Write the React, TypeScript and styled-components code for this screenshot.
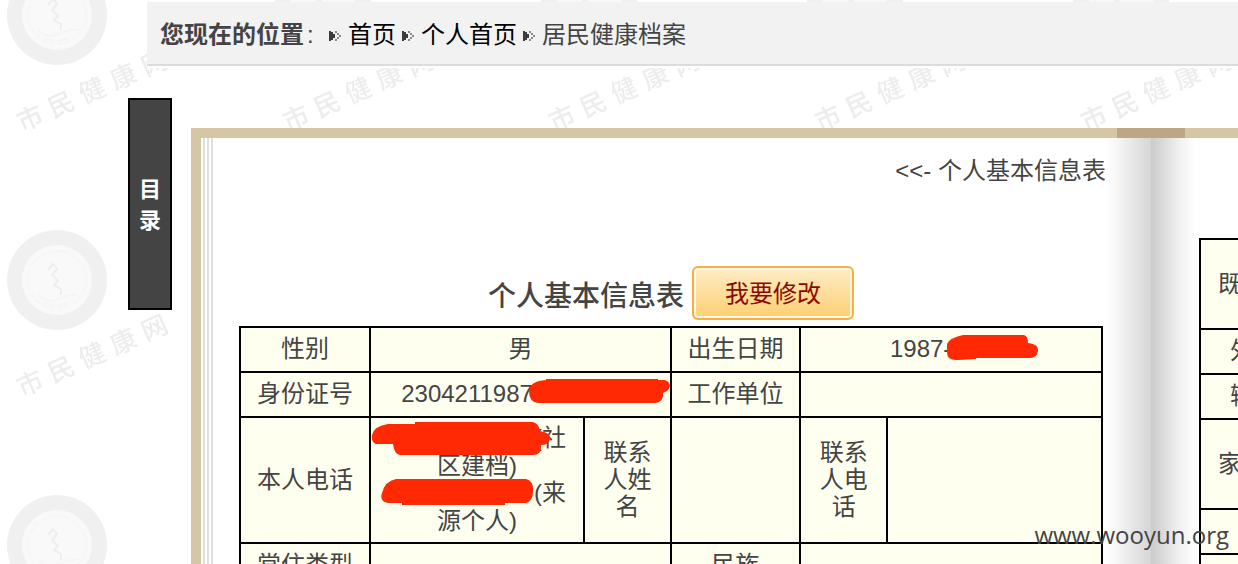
import React from "react";
import styled, { createGlobalStyle } from "styled-components";

const INK = "#444";
const TAN = "#d7c6a5";

const GlobalStyle = createGlobalStyle`
  * { box-sizing: border-box; }
  body {
    margin: 0;
    background: #fff;
    color: ${INK};
    font: 24px/27px "Liberation Sans", "Noto Sans CJK SC", sans-serif;
  }
`;

const Page = styled.div`
  position: relative;
  display: flex;
  flex-direction: column;
  height: 100vh;
  overflow: hidden;
  padding-top: 2px;
`;

const Backdrop = styled.svg`
  position: absolute;
  inset: 0;
  width: 100%;
  height: 100%;
  z-index: -1;
`;

const Breadcrumb = styled.nav`
  display: flex;
  align-items: center;
  flex: none;
  height: 66px;
  margin-left: 147px;
  padding: 0 0 2px 13px;
  background: linear-gradient(#f2f2f2 62px, #dcdcdc 62px, #dcdcdc 64px, #fff 64px);
`;

const Crumb = styled.a`
  color: #000;
  text-decoration: none;
`;

const Arrow = styled.svg`
  flex: none;
  width: 12px;
  height: 12px;
  margin: 4px 7px 0 6px;
`;

const Colon = styled.span`
  width: 19px;
  padding-left: 3px;
`;

const Main = styled.main`
  display: flex;
  flex: 1;
  align-items: flex-start;
  padding-left: 128px;
`;

const Contents = styled.button`
  flex: none;
  width: 44px;
  height: 212px;
  margin: 30px 19px 0 0;
  padding: 0 8px 2px;
  border: 2px solid #000;
  background: #444;
  color: #fff;
  font: bold 22px/31px "Noto Sans CJK SC", sans-serif;
`;

const Book = styled.div`
  display: flex;
  flex: 1;
  min-width: 0;
  margin-top: 60px;
  border-left: 10px solid ${TAN};
`;

const LeftPage = styled.section`
  flex: 1;
  min-width: 0;
  padding: 19px 2px 0 38px;
  border-top: 10px solid ${TAN};
  background: linear-gradient(
      90deg,
      #fff 2px, #dfdfdf 2px, #dfdfdf 4px,
      #fff 4px, #fff 6px, #dfdfdf 6px, #dfdfdf 8px,
      #fff 8px, #fff 10px, #dfdfdf 10px, #dfdfdf 12px, #fff 12px
    );
`;

const Spine = styled.div`
  flex: none;
  width: 94px;
  padding-top: 10px;
  background: linear-gradient(90deg, ${TAN} 12px, #bda684 12px, #bda684 80px, ${TAN} 80px);
`;

const SpineShade = styled.div`
  height: 100%;
  background: linear-gradient(
    90deg,
    #fff 0, #f6f6f6 12px, #e6e6e6 28px, #d6d6d6 46px,
    #cbcbcb 46px, #dadada 58px, #f0f0f0 74px, #fff 90px
  );
`;

const RightPage = styled.section`
  flex: none;
  width: 39px;
  padding-top: 100px;
  border-top: 10px solid ${TAN};
  background: #fff;
  overflow: hidden;
`;

const PageLink = styled.a`
  display: block;
  margin-right: -3px;
  text-align: right;
  color: ${INK};
  text-decoration: none;
`;

const TitleRow = styled.div`
  display: flex;
  align-items: center;
  justify-content: center;
  margin: 82px 0 6px;
  gap: 8px;
`;

const Title = styled.h1`
  margin: 8px 0 0;
  font-size: 28px;
  line-height: 36px;
  font-weight: 500;
`;

const EditButton = styled.button`
  width: 162px;
  height: 54px;
  padding: 0 0 2px;
  border: 2px solid #fcae3a;
  border-radius: 6px;
  background: linear-gradient(#feecc6, #fdcf70);
  box-shadow: inset 0 0 0 2px #fff8e6;
  color: #8b0a00;
  font: 24px/30px "Noto Sans CJK SC", sans-serif;
`;

const RecordTable = styled.table`
  width: 100%;
  table-layout: fixed;
  border-collapse: collapse;
  background: #fffff0;
`;

const Row = styled.tr<{ $height: number }>`
  height: ${(p) => p.$height}px;
`;

const Label = styled.th`
  padding: 0 10px 2px;
  border: 2px solid #000;
  font-weight: 400;
`;

const Value = styled.td`
  padding: 0 10px 2px;
  border: 2px solid #000;
  text-align: center;
`;

const SideLabel = styled.th<{ $indent: number }>`
  padding: 0 0 2px ${(p) => p.$indent}px;
  border: 2px solid #000;
  border-right: 0;
  font-weight: 400;
  text-align: left;
  white-space: nowrap;
`;

const Scribble = styled.svg`
  position: relative;
  z-index: 1;
  height: 24px;
  overflow: visible;
  vertical-align: middle;
  fill: #ff2a04;
`;

const SiteMark = styled.footer`
  position: absolute;
  right: 9px;
  bottom: 12px;
  z-index: 2;
  font: 24px/34px "Open Sans", sans-serif;
`;

const CrumbArrow = () => (
  <Arrow viewBox="0 0 12 12" aria-hidden="true">
    <path d="M0 1h2v1h2v2h2v4H4v2H2v1H0z" fill="#3c3c3c" />
    <path d="M6 1h2v2H6zM8 3h2v2H8zM10 5h2v2h-2zM8 7h2v2H8zM6 9h2v2H6z" fill="#8a8a8a" />
  </Arrow>
);

const Watermark = () => (
  <Backdrop aria-hidden="true">
    <defs>
      <pattern id="seal" width="266" height="265" patternUnits="userSpaceOnUse" y="-50">
        <circle cx="57" cy="65" r="50" fill="#f0f0f0" />
        <circle cx="57" cy="65" r="35" fill="#f9f9f9" />
        <circle cx="57" cy="65" r="29" fill="none" stroke="#f6f6f6" strokeWidth="2" strokeDasharray="5 3" />
        <path d="M48 55l5-6 4 5-5 6 6 6-4 4 7 4v6" fill="none" stroke="#eee" strokeWidth="2" />
        <path d="M38 80q10 9 20 4t20-4M45 88q12 6 24 0" fill="none" stroke="#f5f5f5" strokeWidth="2" />
        <g
          transform="translate(22 182) rotate(-24)"
          fill="#ededed"
          fontSize="26"
          fontWeight="500"
          fontFamily="Noto Sans CJK SC, sans-serif"
        >
          <text x="0">市</text>
          <text x="34">民</text>
          <text x="68">健</text>
          <text x="102">康</text>
          <text x="136">网</text>
        </g>
      </pattern>
    </defs>
    <rect width="100%" height="100%" fill="url(#seal)" />
  </Backdrop>
);

const sideRows = [
  { text: "既", indent: 17, height: 90 },
  { text: "外", indent: 29, height: 45 },
  { text: "输", indent: 29, height: 45 },
  { text: "家", indent: 17, height: 90 },
  { text: "", indent: 17, height: 45 },
  { text: "", indent: 17, height: 45 },
];

export default function App() {
  return (
    <>
      <GlobalStyle />
      <Page>
        <Watermark />
        <Breadcrumb>
          <strong>您现在的位置</strong>
          <Colon>:</Colon>
          <CrumbArrow />
          <Crumb href="#home">首页</Crumb>
          <CrumbArrow />
          <Crumb href="#me">个人首页</Crumb>
          <CrumbArrow />
          <span>居民健康档案</span>
        </Breadcrumb>
        <Main>
          <Contents type="button">目录</Contents>
          <Book>
            <LeftPage>
              <PageLink href="#basic">&lt;&lt;- 个人基本信息表</PageLink>
              <TitleRow>
                <Title>个人基本信息表</Title>
                <EditButton type="button">我要修改</EditButton>
              </TitleRow>
              <RecordTable>
                <colgroup>
                  <col style={{ width: "15.1%" }} />
                  <col style={{ width: "24.8%" }} />
                  <col style={{ width: "10.1%" }} />
                  <col style={{ width: "15%" }} />
                  <col style={{ width: "10.1%" }} />
                  <col style={{ width: "24.9%" }} />
                </colgroup>
                <tbody>
                  <Row $height={45}>
                    <Label scope="row">性别</Label>
                    <Value colSpan={2}>男</Value>
                    <Label scope="row">出生日期</Label>
                    <Value colSpan={2}>
                      1987-
                      <Scribble width="61" aria-hidden="true">
                        <path d="M-4 6Q-2 0 12-3H73Q77-2 77 5Q88 6 87 13Q86 20 79 20H25V21L7 22Q-4 23-4 14z" />
                      </Scribble>
                    </Value>
                  </Row>
                  <Row $height={45}>
                    <Label scope="row">身份证号</Label>
                    <Value colSpan={2}>
                      2304211987
                      <Scribble width="107" aria-hidden="true">
                        <path d="M-4 8Q-3-2 13-3V-4H125V-3H132Q137-1 137 3Q136 8 130 10Q131 18 123 20H5Q-4 19-4 8z" />
                      </Scribble>
                    </Value>
                    <Label scope="row">工作单位</Label>
                    <Value colSpan={2} />
                  </Row>
                  <Row $height={126}>
                    <Label scope="row">本人电话</Label>
                    <Value>
                      <Scribble width="146" aria-hidden="true">
                        <path d="M-16 7Q-14-2 0-4H27V-6H145Q151-4 152 3Q162 4 162 11Q161 17 153 17Q154 27 145 27H12Q6 26 5 16H-12Q-17 14-16 7z" />
                      </Scribble>
                      (社区建档)
                      <br />
                      <Scribble width="146" aria-hidden="true">
                        <path d="M-6 10Q-3-2 8-4H138Q146-2 145 9Q145 18 138 20H117V22H14V20H0Q-9 18-6 10z" />
                      </Scribble>
                      (来源个人)
                    </Value>
                    <Label scope="row">联系人姓名</Label>
                    <Value />
                    <Label scope="row">联系人电话</Label>
                    <Value />
                  </Row>
                  <Row $height={45}>
                    <Label scope="row">常住类型</Label>
                    <Value colSpan={2} />
                    <Label scope="row">民族</Label>
                    <Value colSpan={2} />
                  </Row>
                </tbody>
              </RecordTable>
            </LeftPage>
            <Spine>
              <SpineShade />
            </Spine>
            <RightPage>
              <RecordTable>
                <tbody>
                  {sideRows.map((row, i) => (
                    <Row $height={row.height} key={i}>
                      <SideLabel scope="row" $indent={row.indent}>{row.text}</SideLabel>
                    </Row>
                  ))}
                </tbody>
              </RecordTable>
            </RightPage>
          </Book>
        </Main>
        <SiteMark>www.wooyun.org</SiteMark>
      </Page>
    </>
  );
}
